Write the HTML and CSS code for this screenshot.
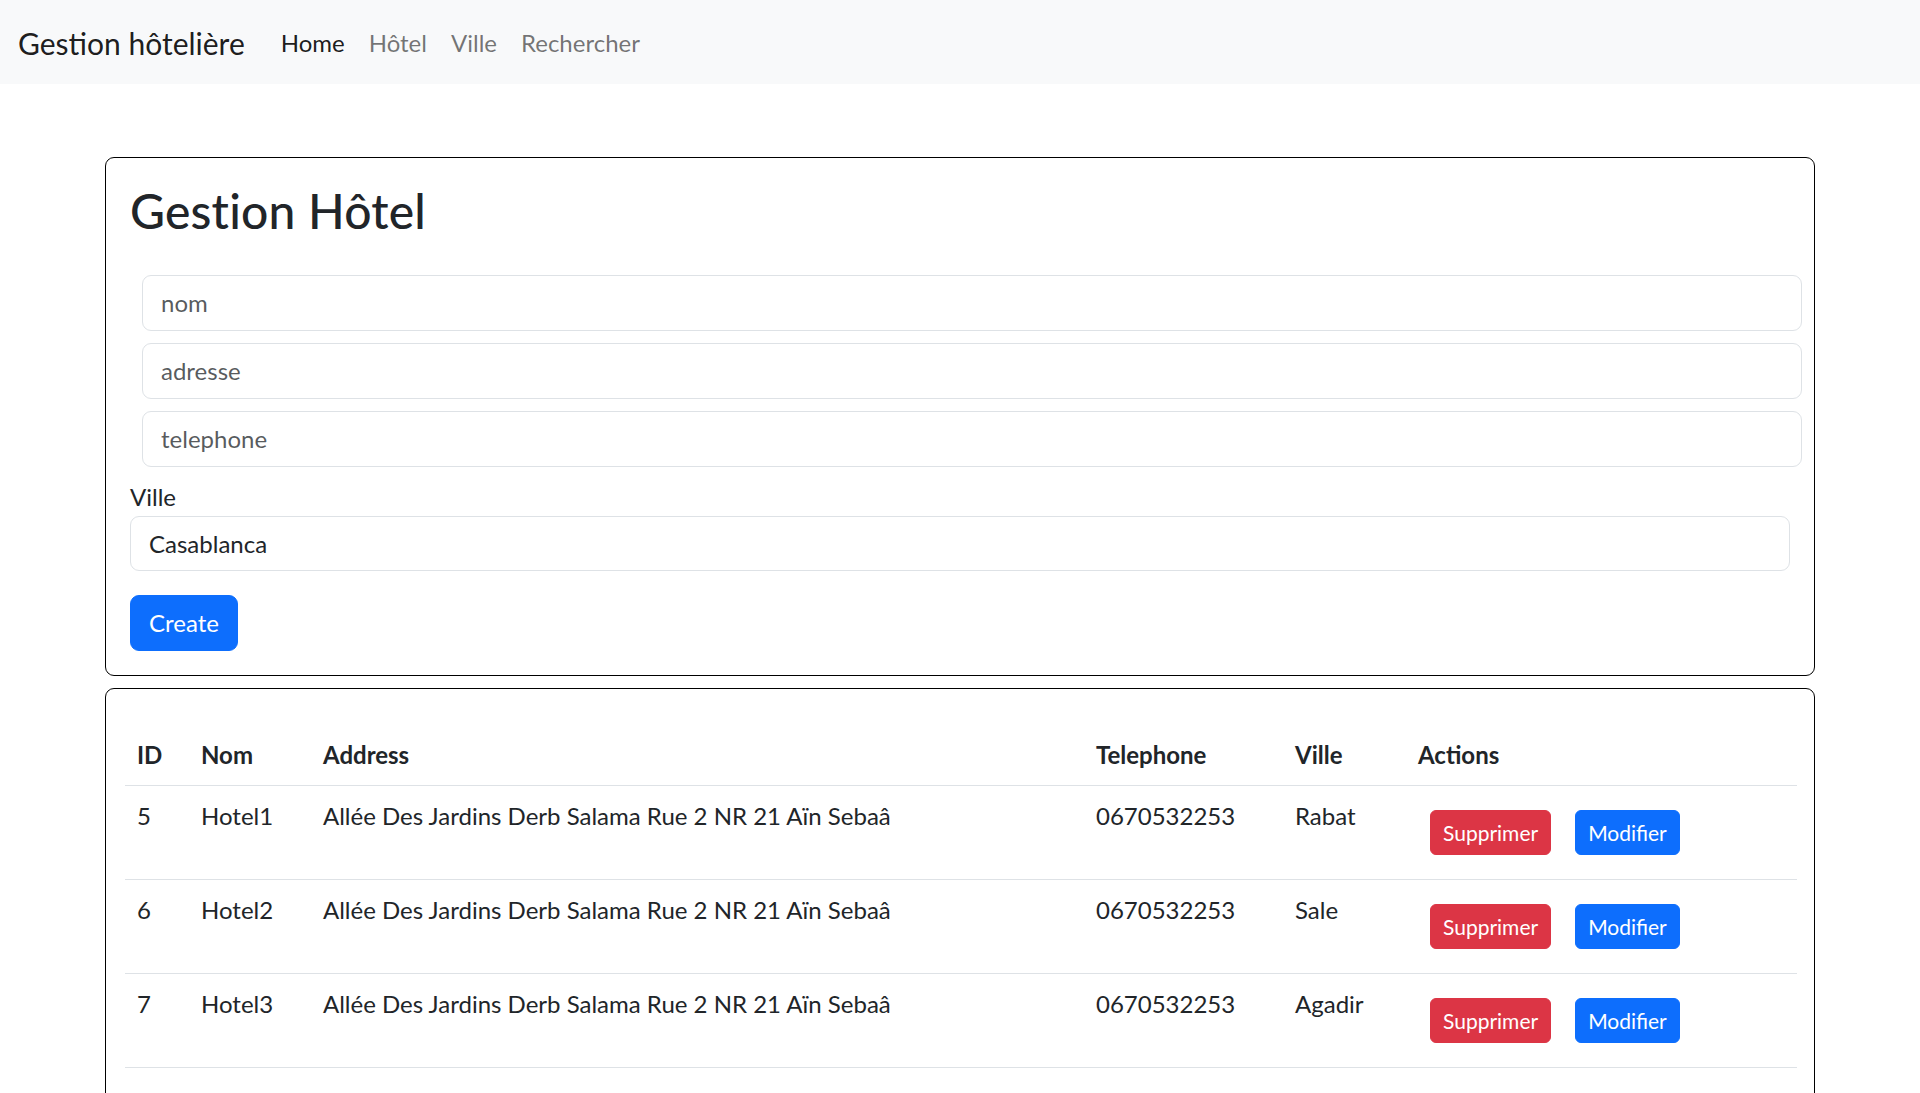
FILE: index.html
```html
<!DOCTYPE html>
<html lang="fr">
<head>
<meta charset="utf-8">
<title>Gestion hôtelière</title>
<link rel="stylesheet" href="styles.css">
</head>
<body>
<nav class="navbar">
  <a class="brand" href="#">Gestion hôtelière</a>
  <ul class="nav">
    <li><a class="nav-link active" href="#">Home</a></li>
    <li><a class="nav-link" href="#">Hôtel</a></li>
    <li><a class="nav-link" href="#">Ville</a></li>
    <li><a class="nav-link" href="#">Rechercher</a></li>
  </ul>
</nav>

<main class="container">
  <section class="card form-card">
    <h1 class="title">Gestion Hôtel</h1>
    <form class="hotel-form">
      <div class="fields">
        <input class="field" type="text" placeholder="nom">
        <input class="field" type="text" placeholder="adresse">
        <input class="field" type="text" placeholder="telephone">
      </div>
      <label class="label" for="ville">Ville</label>
      <select class="select" id="ville">
        <option>Casablanca</option>
        <option>Rabat</option>
        <option>Sale</option>
        <option>Agadir</option>
      </select>
      <button class="btn btn-primary btn-create" type="button">Create</button>
    </form>
  </section>

  <section class="card table-card">
    <table class="table">
      <colgroup>
        <col class="c-id"><col class="c-nom"><col class="c-addr"><col class="c-tel"><col class="c-ville"><col class="c-act">
      </colgroup>
      <thead>
        <tr><th>ID</th><th>Nom</th><th>Address</th><th>Telephone</th><th>Ville</th><th>Actions</th></tr>
      </thead>
      <tbody>
        <tr>
          <td>5</td><td>Hotel1</td><td>Allée Des Jardins Derb Salama Rue 2 NR 21 Aïn Sebaâ</td><td>0670532253</td><td>Rabat</td>
          <td><div class="actions"><button class="btn btn-sm btn-danger" type="button">Supprimer</button><button class="btn btn-sm btn-primary" type="button">Modifier</button></div></td>
        </tr>
        <tr>
          <td>6</td><td>Hotel2</td><td>Allée Des Jardins Derb Salama Rue 2 NR 21 Aïn Sebaâ</td><td>0670532253</td><td>Sale</td>
          <td><div class="actions"><button class="btn btn-sm btn-danger" type="button">Supprimer</button><button class="btn btn-sm btn-primary" type="button">Modifier</button></div></td>
        </tr>
        <tr>
          <td>7</td><td>Hotel3</td><td>Allée Des Jardins Derb Salama Rue 2 NR 21 Aïn Sebaâ</td><td>0670532253</td><td>Agadir</td>
          <td><div class="actions"><button class="btn btn-sm btn-danger" type="button">Supprimer</button><button class="btn btn-sm btn-primary" type="button">Modifier</button></div></td>
        </tr>
      </tbody>
    </table>
  </section>
</main>
</body>
</html>
```
FILE: styles.css
```css
* { box-sizing: border-box; }

html, body {
  margin: 0;
  padding: 0;
}

body {
  font-family: Lato, "Open Sans", sans-serif;
  font-size: 24px;
  line-height: 1.5;
  color: #212529;
  background: #fff;
}

/* ---------- navbar ---------- */
.navbar {
  display: flex;
  align-items: center;
  height: 84px;
  padding: 13px 18px 11px;
  background: #f8f9fa;
}

.brand {
  font-size: 30px;
  line-height: 45px;
  padding: 7.5px 0;
  margin-right: 24px;
  color: rgba(0, 0, 0, 0.9);
  text-decoration: none;
  white-space: nowrap;
}

.nav {
  display: flex;
  list-style: none;
  margin: 0;
  padding: 0;
}

.nav-link {
  display: block;
  padding: 12px 12px;
  line-height: 36px;
  color: rgba(0, 0, 0, 0.55);
  text-decoration: none;
}

.nav-link.active {
  color: rgba(0, 0, 0, 0.9);
}

/* ---------- layout ---------- */
.container {
  width: 1710px;
  margin: 73px auto 0;
}

.card {
  border: 1px solid #000;
  border-radius: 9px;
  background: #fff;
}

.form-card {
  padding: 24px;
}

.title {
  margin: 0 0 35px;
  font-size: 48px;
  font-weight: 500;
  line-height: 1.2;
  letter-spacing: 0.2px;
}

.hotel-form {
  display: flex;
  flex-direction: column;
  align-items: flex-start;
}

.fields {
  display: flex;
  flex-direction: column;
  gap: 12px;
  align-self: stretch;
  margin: 0 -12px 12px 12px;
}

.field,
.select {
  display: block;
  width: 100%;
  height: 56px;
  padding: 0 18px;
  font-family: inherit;
  font-size: 24px;
  color: #212529;
  background: #fff;
  border: 1px solid #dee2e6;
  border-radius: 9px;
  outline: none;
}

.field::placeholder {
  color: rgba(33, 37, 41, 0.75);
  opacity: 1;
}

.label {
  display: block;
  line-height: 36px;
  margin-bottom: 1px;
}

.select {
  -webkit-appearance: none;
  appearance: none;
  height: 55px;
}

.btn {
  display: inline-block;
  font-family: inherit;
  font-size: 24px;
  line-height: 36px;
  padding: 9px 18px;
  border: 1px solid transparent;
  border-radius: 9px;
  color: #fff;
  cursor: pointer;
}

.btn-primary {
  background: #0d6efd;
  border-color: #0d6efd;
}

.btn-danger {
  background: #dc3545;
  border-color: #dc3545;
}

.btn-create {
  margin-top: 24px;
}

.btn-sm {
  font-size: 21px;
  line-height: 31px;
  padding: 6px 12px;
  border-radius: 6px;
  margin: 12px;
}

/* ---------- table ---------- */
.table-card {
  margin-top: 12px;
  padding: 36px 17px 48px 19px;
}

.table {
  width: 100%;
  table-layout: fixed;
  border-collapse: collapse;
  vertical-align: top;
}

.c-id { width: 64px; }
.c-nom { width: 122px; }
.c-addr { width: 773px; }
.c-tel { width: 199px; }
.c-ville { width: 123px; }
.c-act { width: auto; }

.table th,
.table td {
  padding: 12px;
  text-align: left;
  vertical-align: top;
  border-bottom: 1px solid #dee2e6;
  white-space: nowrap;
}

.table th {
  font-weight: 700;
}

.actions {
  display: flex;
  margin: -12px 0;
  padding: 12px 0;
}
```
